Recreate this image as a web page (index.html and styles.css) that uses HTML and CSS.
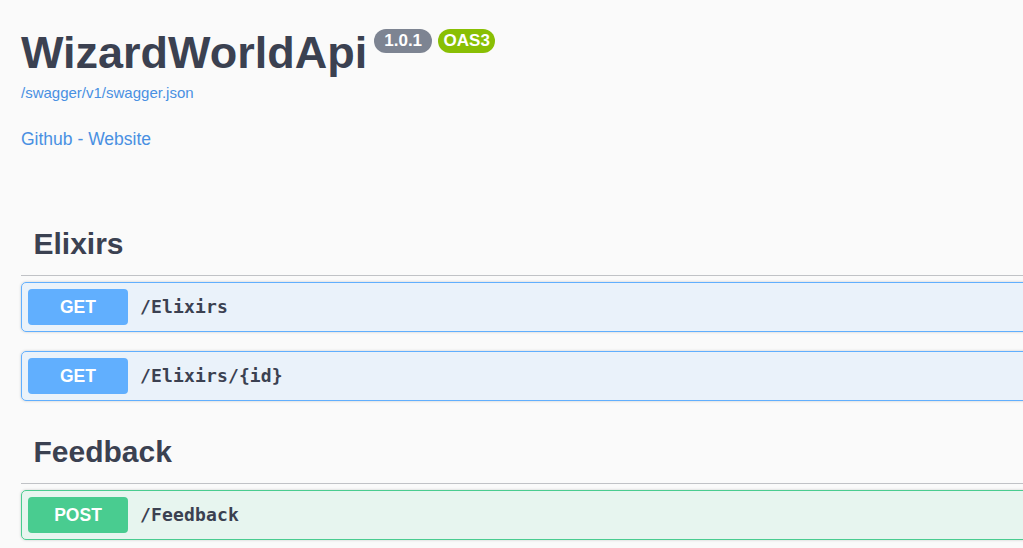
FILE: index.html
```html
<!DOCTYPE html>
<html lang="en">
<head>
<meta charset="utf-8">
<title>WizardWorldApi</title>
<link rel="stylesheet" href="styles.css">
</head>
<body>
<div class="wrapper">
  <section class="info">
    <div class="title-row">
      <h1 class="title">WizardWorldApi</h1>
      <span class="badge badge-version">1.0.1</span>
      <span class="badge badge-oas">OAS3</span>
    </div>
    <a class="base-url" href="#">/swagger/v1/swagger.json</a>
    <p class="links"><a href="#">Github</a> - <a href="#">Website</a></p>
  </section>

  <section class="tag-section">
    <h3 class="tag">Elixirs</h3>
    <div class="opblock opblock-get">
      <span class="method">GET</span>
      <span class="path">/Elixirs</span>
    </div>
    <div class="opblock opblock-get">
      <span class="method">GET</span>
      <span class="path">/Elixirs/{id}</span>
    </div>
  </section>

  <section class="tag-section">
    <h3 class="tag">Feedback</h3>
    <div class="opblock opblock-post">
      <span class="method">POST</span>
      <span class="path">/Feedback</span>
    </div>
  </section>
</div>
</body>
</html>
```

FILE: styles.css
```css
html, body {
  margin: 0;
  padding: 0;
  background: #fafafa;
  overflow: hidden;
}

body {
  font-family: "Liberation Sans", Arial, sans-serif;
  color: #3b4151;
}

.wrapper {
  width: 1200px;
  padding: 0 0 0 21px;
}

.info {
  padding-top: 27px;
  margin-bottom: 62px;
}

.title-row {
  display: flex;
  align-items: flex-start;
  height: 52px;
}

.title {
  margin: 0;
  font-size: 45px;
  line-height: 52px;
  font-weight: 700;
  color: #3b4151;
}

.badge {
  margin-top: 2px;
  height: 24px;
  line-height: 24px;
  border-radius: 57px;
  color: #fff;
  font-size: 17px;
  font-weight: 700;
}

.badge-version {
  margin-left: 7px;
  padding: 0 10px;
  background: #7d8492;
}

.badge-oas {
  margin-left: 6px;
  padding: 0 5.5px;
  background: #89bf04;
}

.base-url {
  display: block;
  margin-top: 5px;
  font-size: 15px;
  line-height: 18px;
  color: #4990e2;
  text-decoration: none;
}

.links {
  margin: 26px 0 0;
  font-size: 17.5px;
  line-height: 22px;
  color: #4990e2;
}

.links a {
  color: #4990e2;
  text-decoration: none;
}

.tag {
  margin: 0 0 6px;
  padding: 12.5px 25px 12.5px 12.5px;
  font-size: 30px;
  line-height: 38px;
  font-weight: 700;
  color: #3b4151;
  border-bottom: 1px solid rgba(59, 65, 81, 0.3);
}

.opblock {
  display: flex;
  align-items: center;
  margin-bottom: 19px;
  padding: 6px;
  border: 1px solid;
  border-radius: 5px;
  box-shadow: 0 0 3px rgba(0, 0, 0, 0.19);
}

.opblock-get {
  background: rgba(97, 175, 254, 0.1);
  border-color: #61affe;
}

.opblock-post {
  background: rgba(73, 204, 144, 0.1);
  border-color: #49cc90;
}

.method {
  width: 100px;
  height: 36px;
  line-height: 36px;
  text-align: center;
  border-radius: 4px;
  color: #fff;
  font-size: 17.5px;
  font-weight: 700;
}

.opblock-get .method {
  background: #61affe;
}

.opblock-post .method {
  background: #49cc90;
}

.path {
  padding-left: 12px;
  font-family: "DejaVu Sans Mono", "Liberation Mono", monospace;
  font-size: 18px;
  line-height: 36px;
  font-weight: 700;
  letter-spacing: 0.15px;
  color: #3b4151;
}
```
